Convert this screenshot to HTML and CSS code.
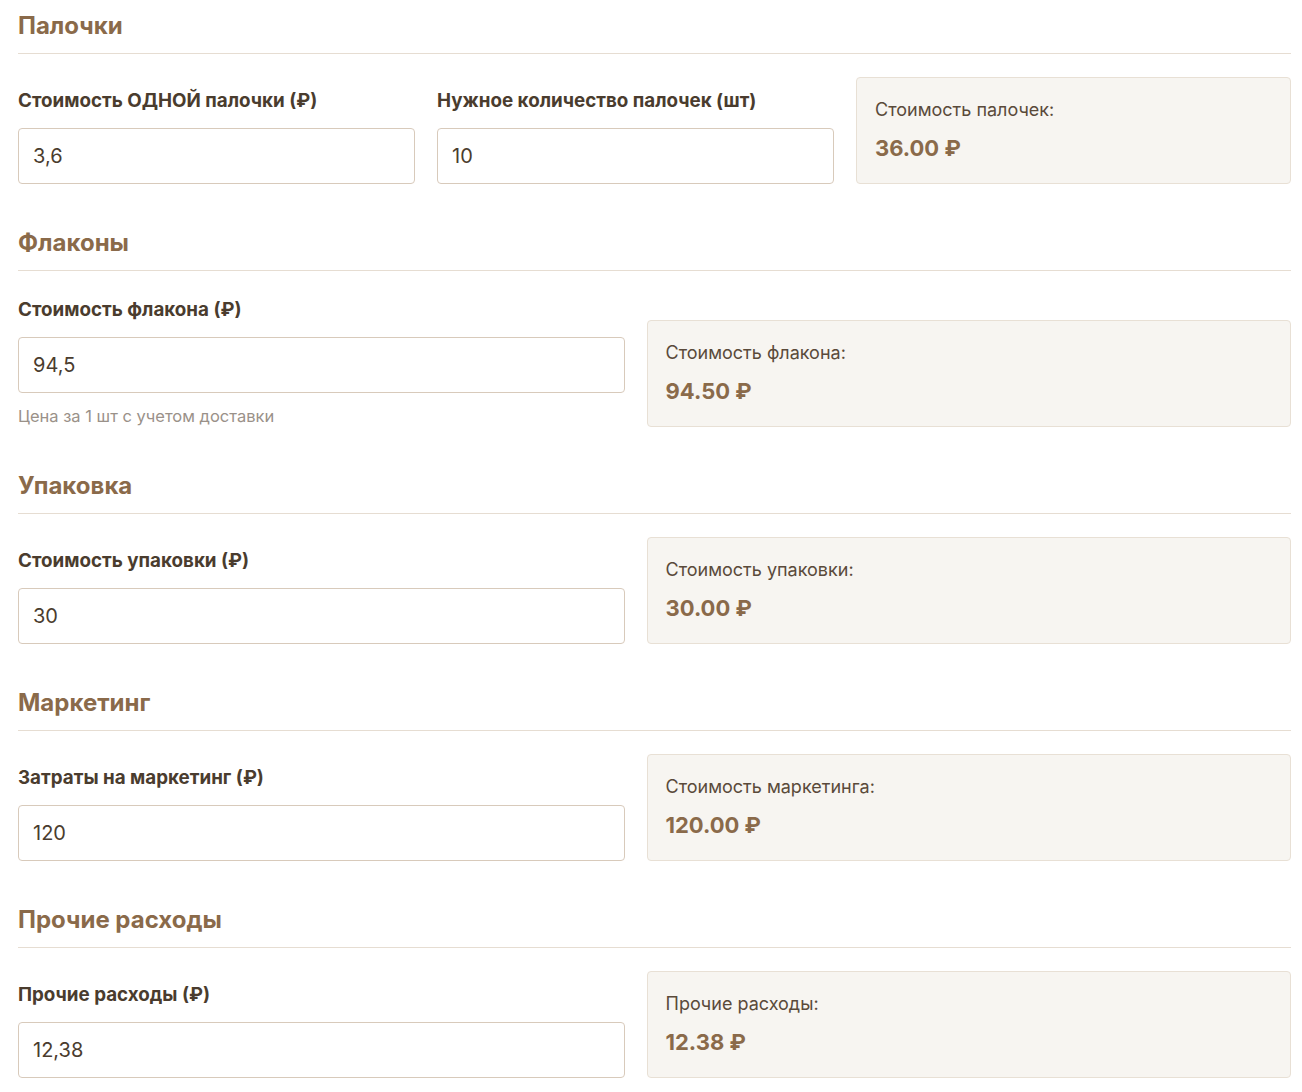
FILE: index.html
```html
<!DOCTYPE html>
<html lang="ru">
<head>
    <meta charset="UTF-8">
    <meta name="viewport" content="width=device-width, initial-scale=1.0">
    <title>Калькулятор себестоимости</title>
    <link rel="stylesheet" href="styles.css">
</head>
<body>
    <div class="calc">
        <section class="block">
            <h2 class="block-title">Палочки</h2>
            <div class="row">
                <div class="field">
                    <label for="stickPrice">Стоимость ОДНОЙ палочки (₽)</label>
                    <input type="text" id="stickPrice" value="3,6">
                </div>
                <div class="field">
                    <label for="stickCount">Нужное количество палочек (шт)</label>
                    <input type="text" id="stickCount" value="10">
                </div>
                <div class="result">
                    <div class="result-label">Стоимость палочек:</div>
                    <div class="result-value">36.00 ₽</div>
                </div>
            </div>
        </section>

        <section class="block">
            <h2 class="block-title">Флаконы</h2>
            <div class="row">
                <div class="field">
                    <label for="bottlePrice">Стоимость флакона (₽)</label>
                    <input type="text" id="bottlePrice" value="94,5">
                    <div class="hint">Цена за 1 шт с учетом доставки</div>
                </div>
                <div class="result">
                    <div class="result-label">Стоимость флакона:</div>
                    <div class="result-value">94.50 ₽</div>
                </div>
            </div>
        </section>

        <section class="block">
            <h2 class="block-title">Упаковка</h2>
            <div class="row">
                <div class="field">
                    <label for="packPrice">Стоимость упаковки (₽)</label>
                    <input type="text" id="packPrice" value="30">
                </div>
                <div class="result">
                    <div class="result-label">Стоимость упаковки:</div>
                    <div class="result-value">30.00 ₽</div>
                </div>
            </div>
        </section>

        <section class="block">
            <h2 class="block-title">Маркетинг</h2>
            <div class="row">
                <div class="field">
                    <label for="marketing">Затраты на маркетинг (₽)</label>
                    <input type="text" id="marketing" value="120">
                </div>
                <div class="result">
                    <div class="result-label">Стоимость маркетинга:</div>
                    <div class="result-value">120.00 ₽</div>
                </div>
            </div>
        </section>

        <section class="block">
            <h2 class="block-title">Прочие расходы</h2>
            <div class="row">
                <div class="field">
                    <label for="other">Прочие расходы (₽)</label>
                    <input type="text" id="other" value="12,38">
                </div>
                <div class="result">
                    <div class="result-label">Прочие расходы:</div>
                    <div class="result-value">12.38 ₽</div>
                </div>
            </div>
        </section>
    </div>
</body>
</html>
```

FILE: styles.css
```css
body {
    font-family: 'Inter', 'Liberation Sans', sans-serif;
    margin: 0;
    color: #4a3c2e;
    background: #fff;
}
.calc {
    width: 1273px;
    margin-left: 18px;
    padding-top: 10px;
}
.block {
    margin-bottom: 43px;
}
.block:last-child {
    margin-bottom: 0;
}
.block-title {
    font-size: 24px;
    line-height: 32px;
    font-weight: 700;
    color: #8a6a4a;
    margin: 0 0 23px;
    padding-bottom: 11px;
    border-bottom: 1px solid #e6ddd2;
}
.row {
    display: flex;
    align-items: flex-end;
    gap: 22px;
}
.field {
    flex: 1 1 0;
    min-width: 0;
}
.field label {
    display: block;
    font-size: 18.8px;
    line-height: 32px;
    font-weight: 700;
    color: #4a3c2e;
    margin-bottom: 11px;
}
.field input {
    display: block;
    box-sizing: border-box;
    width: 100%;
    height: 56px;
    padding: 0 14px;
    font-family: inherit;
    font-size: 20px;
    color: #4a3c2e;
    border: 1px solid #d8cabb;
    border-radius: 4px;
    background: #fff;
}
.hint {
    margin-top: 12px;
    font-size: 16.5px;
    line-height: 22px;
    color: #9a9189;
}
.result {
    flex: 1 1 0;
    min-width: 0;
    padding: 20px 18px;
    background: #f7f5f1;
    border: 1px solid #e8e0d5;
    border-radius: 4px;
}
.result-label {
    font-size: 18px;
    line-height: 24px;
    color: #5a4a3a;
    margin-bottom: 12px;
}
.result-value {
    font-size: 22px;
    line-height: 29px;
    font-weight: 700;
    color: #8a6a4a;
}
```
